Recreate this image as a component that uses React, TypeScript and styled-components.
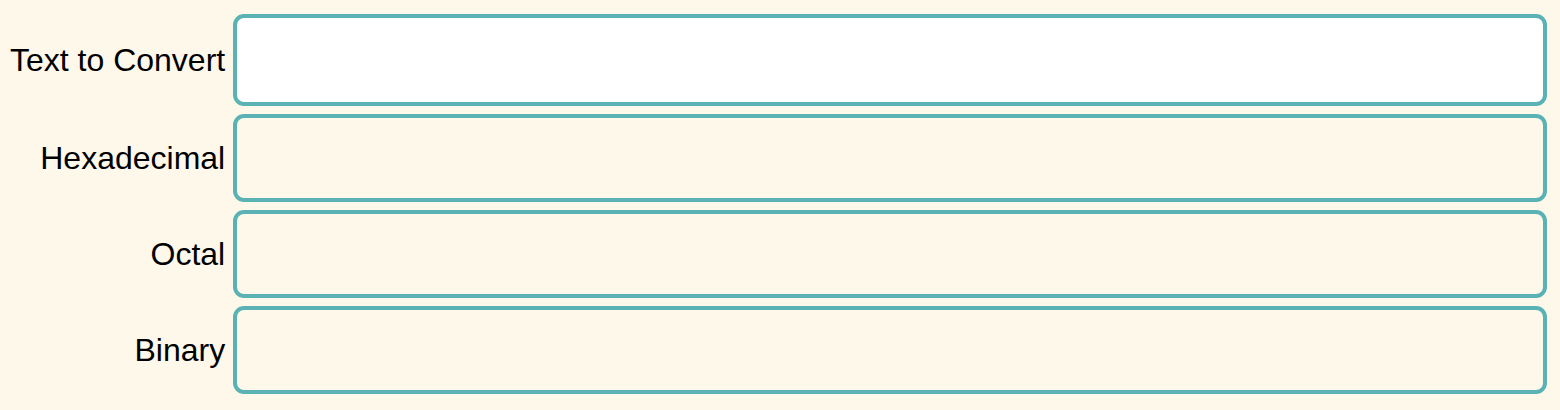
import styled, { createGlobalStyle } from 'styled-components';

const GlobalStyle = createGlobalStyle`
  html,
  body {
    margin: 0;
    padding: 0;
    background: #fef8eb;
  }
`;

const ConverterForm = styled.div`
  display: grid;
  grid-template-columns: auto 1fr;
  column-gap: 8px;
  row-gap: 8px;
  padding: 14px 13px 0 10px;
  font-family: 'Liberation Sans', Arial, Helvetica, sans-serif;
`;

const FieldLabel = styled.label`
  display: flex;
  align-items: center;
  justify-content: flex-end;
  font-size: 32px;
  color: #000;
  white-space: nowrap;
`;

const FieldBox = styled.textarea<{ $editable?: boolean }>`
  display: block;
  box-sizing: border-box;
  width: 100%;
  height: ${(p) => (p.$editable ? '92px' : '88px')};
  margin: 0;
  padding: 8px 12px;
  border: 4px solid #5ab2b4;
  border-radius: 11px;
  background: ${(p) => (p.$editable ? '#ffffff' : '#fef8eb')};
  font-family: inherit;
  font-size: 24px;
  resize: none;
  outline: none;
`;

const fields = [
  { id: 'text', label: 'Text to Convert', editable: true },
  { id: 'hex', label: 'Hexadecimal' },
  { id: 'octal', label: 'Octal' },
  { id: 'binary', label: 'Binary' },
];

export default function App(): JSX.Element {
  return (
    <>
      <GlobalStyle />
      <ConverterForm>
        {fields.map((f) => (
          <>
            <FieldLabel key={`${f.id}-label`} htmlFor={f.id}>
              {f.label}
            </FieldLabel>
            <FieldBox
              key={f.id}
              id={f.id}
              $editable={f.editable}
              readOnly={!f.editable}
            />
          </>
        ))}
      </ConverterForm>
    </>
  );
}
